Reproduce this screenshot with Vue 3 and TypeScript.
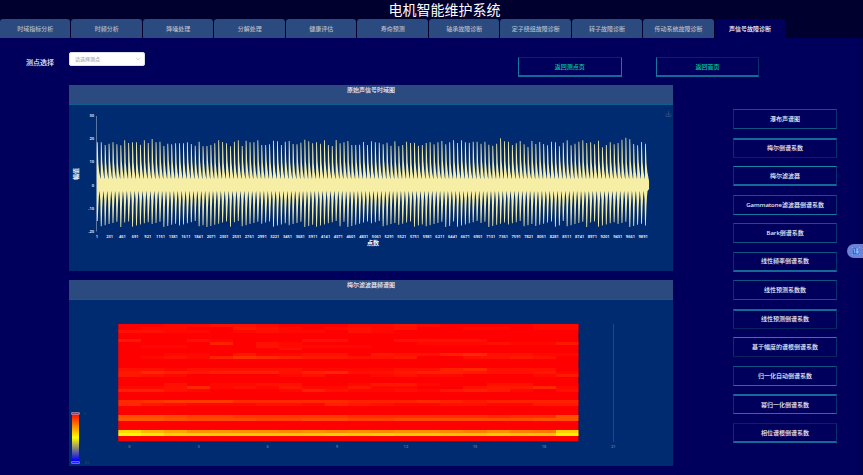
<script setup lang="ts">
import { ref } from 'vue'

interface SideItem {
  label: string
  top: string
  bottom: string
}

const tabs: string[] = [
  '时域指标分析', '时频分析', '降噪处理', '分解处理', '健康评估', '寿命预测',
  '轴承故障诊断', '定子绕组故障诊断', '转子故障诊断', '传动系统故障诊断', '声信号故障诊断',
]
const activeTab = ref(10)
const point = ref('')

const sideItems: SideItem[] = [
  { label: '瀑布声谱图', top: 'mid', bottom: 'mid' },
  { label: '梅尔倒谱系数', top: 'strong', bottom: 'dim' },
  { label: '梅尔滤波器', top: 'bright', bottom: 'strong' },
  { label: 'Gammatone滤波器倒谱系数', top: 'mid', bottom: 'bright' },
  { label: 'Bark倒谱系数', top: 'mid', bottom: 'mid' },
  { label: '线性频率倒谱系数', top: 'mid', bottom: 'strong' },
  { label: '线性预测系数数', top: 'mid', bottom: 'mid' },
  { label: '线性预测倒谱系数', top: 'strong', bottom: 'dim' },
  { label: '基于幅度的谱根倒谱系数', top: 'bright', bottom: 'dim' },
  { label: '归一化自动倒谱系数', top: 'mid', bottom: 'bright' },
  { label: '幂归一化倒谱系数', top: 'strong', bottom: 'bright' },
  { label: '相位谱根倒谱系数', top: 'dim', bottom: 'strong' },
]

// Waveform: height of each impulse above the zero line, in tenths of a chart unit
const peaks: number[] = [
  427, 427, 400, 413, 427, 407, 397, 447, 420, 427, 427, 403, 447, 420, 460, 427, 433, 390, 413, 407,
  417, 417, 417, 427, 410, 393, 433, 387, 390, 400, 417, 447, 430, 417, 387, 433, 447, 390, 443, 427, 427,
  447, 400, 400, 407, 443, 437, 400, 433, 440, 410, 407, 423, 453, 437, 417, 427, 413, 447, 400, 390,
  450, 417, 427, 440, 400, 400, 403, 430, 400, 437, 427, 423, 407, 423, 393, 437, 387, 400, 433, 420,
  423, 393, 400, 420, 427, 407, 427, 440, 407, 427, 447, 420,
  447, 427, 423, 433, 433, 413, 433, 403, 393, 413, 467, 437, 433, 400, 417, 440, 407, 380, 440, 410,
  430, 410, 397, 433, 427, 387, 423, 447, 397, 413, 433, 447, 420, 427, 407, 443, 377, 400, 427, 407,
  420, 453, 473, 457, 410, 397, 430, 413,
]
const zeroY = 80
const startX = 28
const step = 552 / peaks.length

function wavePath(): string {
  const up: string[] = []
  const down: string[] = []
  peaks.forEach((peak, i) => {
    const x = startX + i * step
    const h = peak / 10
    const d = 36 + ((i * 37 + (i % 7) * 11) % 17) * 0.38
    const n = (i * 13) % 5 * 0.5
    const add = (list: string[], dx: number, y: number) =>
      list.push(`${(x + dx).toFixed(2)} ${(zeroY + y).toFixed(2)}`)
    add(up, -0.2, -7)
    add(up, -0.1, -h)
    add(up, 0.7, -h)
    add(up, 1.3, -22 - n)
    add(up, 2.2, -13 - n)
    add(up, 3.0, -9)
    add(up, 3.5, -6)
    add(down, -1.3, 7)
    add(down, -0.6, 14 + n)
    add(down, -0.1, d)
    add(down, 0.7, d)
    add(down, 1.3, 21 + n)
    add(down, 1.9, 11 + n)
    add(down, 2.4, 6)
  })
  down.shift()
  down.shift()
  return `M${up.join('L')}L${startX + 552} 76V84L${down.reverse().join('L')}Z`
}
const wave = wavePath()

const yTicks = [30, 20, 10, 0, -10, -20].map((value) => ({ value, y: zeroY - value * 2.31 }))
const xTicks = Array.from({ length: 44 }, (_, i) => ({ value: 1 + i * 230, x: startX + i * 12.7 }))

// Heat map: one base-36 digit for each cell, eight steps of green per unit
const heat: Record<number, string> = {
  0: '00112210001121000011',
  1: '01100321012120011011',
  2: '22110121102100000000',
  5: '30021000220022220000',
  6: '00004021000001112113',
  7: '01100021111000000000',
  8: '00000002000000000000',
  10: '00110311220322452211',
  11: '01214654332230022320',
  15: '22122222111122452220',
  16: '35434442452234432231',
  17: '32100001200121100013',
  20: '00201122001331002200',
  21: '11251213113110023351',
  22: '44210001421121343102',
  26: '56777555554445434444',
  27: '53211122143211221133',
  31: 'aa98877777666666566a',
  32: 'bba999889988999999aa',
  36: 'rnlijiihihihiihgigfq',
  37: 'vtqqpppppqpqppoopoou',
}
const cells = Object.entries(heat).flatMap(([row, line]) =>
  [...line].map((c, col) => ({
    key: `${row}-${col}`,
    x: 49 + col * 23.03,
    y: 24 + Number(row) * 2.94,
    fill: `rgb(255, ${parseInt(c, 36) * 8}, 0)`,
  })),
)
const heatTicks = [0, 3, 6, 9, 12, 15, 18, 21].map((value) => ({ value, x: 60.5 + value * 23.03 }))
</script>

<template>
  <div class="page">
    <header class="top">
      <h1>电机智能维护系统</h1>
      <nav class="tabs">
        <button
          v-for="(tab, i) in tabs"
          :key="tab"
          type="button"
          class="tab"
          :class="{ active: i === activeTab }"
          @click="activeTab = i"
        >{{ tab }}</button>
      </nav>
    </header>

    <main>
      <div class="toolbar">
        <label for="point">测点选择</label>
        <div class="select">
          <select id="point" v-model="point">
            <option value="">请选择测点</option>
          </select>
          <svg viewBox="0 0 6 4" aria-hidden="true"><path d="M1 .8 3 3 5 .8" /></svg>
        </div>
        <div class="back">
          <button type="button" class="outline t-dim b-strong l-bright r-bright">返回测点页</button>
          <button type="button" class="outline t-dim b-strong l-bright">返回首页</button>
        </div>
      </div>

      <div class="content">
        <div class="charts">
          <section class="panel">
            <h2>原始声信号时域图</h2>
            <svg class="chart" viewBox="0 0 604 166" role="img" aria-label="原始声信号时域图">
              <path class="axis" d="M27.5 11V126.5" />
              <text v-for="t in yTicks" :key="t.value" class="tick end" x="25" :y="t.y + 1.5">{{ t.value }}</text>
              <path class="wave" :d="wave" />
              <text v-for="t in xTicks" :key="t.value" class="tick" :x="t.x" y="132.5">{{ t.value }}</text>
              <text class="name" x="304" y="139.5">点数</text>
              <text class="name" transform="translate(9 69) rotate(-90)">幅值</text>
              <path class="download" d="M599.5 6v4M597.6 8.3l1.9 2 1.9-2M597 9.5v2h5v-2" />
            </svg>
          </section>

          <section class="panel">
            <h2>梅尔滤波器频谱图</h2>
            <svg class="chart" viewBox="0 0 604 166" role="img" aria-label="梅尔滤波器频谱图">
              <defs>
                <linearGradient id="scale" x1="0" y1="0" x2="0" y2="1">
                  <stop offset="0" stop-color="#f00" />
                  <stop offset=".5" stop-color="#ff0" />
                  <stop offset=".97" stop-color="#00f" />
                </linearGradient>
              </defs>
              <rect x="49" y="24" width="460.6" height="117.6" fill="#f00" />
              <g shape-rendering="crispEdges">
                <rect v-for="c in cells" :key="c.key" :x="c.x" :y="c.y" width="23.03" height="2.94" :fill="c.fill" />
              </g>
              <rect class="edge" x="49" y="23.5" width="460.6" height="118" />
              <path class="split" d="M544.5 24V142" />
              <text v-for="t in heatTicks" :key="t.value" class="tick faint" :x="t.x" y="147.5">{{ t.value }}</text>
              <rect x="3" y="113" width="7" height="49" fill="url(#scale)" />
              <rect class="handle" x="2.5" y="112.5" width="8" height="2" rx=".5" fill="#f22" />
              <rect class="handle" x="2.5" y="161.5" width="8" height="2" rx=".5" fill="#22f" />
              <text class="tick dark" x="14.5" y="114.5">0</text>
              <text class="tick dark" x="14.5" y="163.5">-80</text>
            </svg>
          </section>
        </div>

        <aside class="side">
          <button
            v-for="item in sideItems"
            :key="item.label"
            type="button"
            class="outline"
            :class="[`t-${item.top}`, `b-${item.bottom}`]"
          >{{ item.label }}</button>
        </aside>
      </div>
    </main>

    <button type="button" class="float" aria-label="翻译">
      <svg viewBox="0 0 8 8" aria-hidden="true">
        <rect width="8" height="8" rx="1.5" fill="#2563dc" />
        <path d="M1.4 2h1v3.6l.9-.6M3.8 1.8h2.8L4 3.7M4.3 2.2l2.4 1.6M3.8 4.6h3M3.6 5.7h3.3M5.3 3.7v3.3" />
      </svg>
    </button>
  </div>
</template>

<style>
body {
  margin: 0;
  background: #00005c;
}
</style>

<style scoped>
.page {
  position: relative;
  min-height: 100vh;
  background: #00005c;
  color: #f0f1f8;
  font-family: "Noto Sans", "Noto Sans CJK SC", sans-serif;
  font-size: 6px;
  font-weight: 500;
  line-height: 10px;
  overflow: hidden;
}

button,
select {
  font: inherit;
  color: inherit;
  padding: 0;
  margin: 0;
}

button {
  cursor: pointer;
}

.top {
  background: #00002e;
}

h1 {
  margin: 0;
  padding-left: 3%;
  font-size: 14px;
  line-height: 19px;
  font-weight: 400;
  color: #fff;
  text-align: center;
}

.tabs {
  display: grid;
  grid-template-columns: repeat(11, minmax(0, 1fr));
  gap: 1px;
  padding-right: 9%;
}

.tab {
  height: 19px;
  border: 0;
  border-radius: 3px 3px 0 0;
  background: #2b4a80;
  color: #b9bcc4;
  white-space: nowrap;
}

.tab.active {
  background: #00005c;
  color: #fff;
}

main {
  box-shadow: inset -3px 0 #000052;
}

.toolbar {
  display: grid;
  grid-template-columns: 8% 8.75% 1fr 28% 12%;
  align-items: start;
  padding: 14px 0 8px;
}

.toolbar label {
  padding: 6px 15px 0 0;
  font-size: 7px;
  text-align: right;
}

.select {
  position: relative;
}

.select select {
  display: block;
  width: 100%;
  height: 14px;
  padding: 0 5px;
  appearance: none;
  border: 1px solid #dcdfe6;
  border-radius: 2px;
  background: #fff;
  color: #a8acb6;
  font-size: 5px;
}

.select svg {
  position: absolute;
  top: 5px;
  right: 4px;
  width: 6px;
  height: 4px;
  fill: none;
  stroke: #b4b8c0;
  stroke-width: .6;
  pointer-events: none;
}

.back {
  grid-column: 4;
  display: flex;
  justify-content: space-between;
  padding-top: 5px;
  color: #00d49a;
}

.back .outline {
  width: 43%;
}

.outline {
  height: 20px;
  border: 1px solid #08306c;
  background: transparent;
  white-space: nowrap;
}

.t-dim { border-top-color: #062462; }
.t-mid { border-top-color: #0d5482; }
.t-bright { border-top-color: #1787a8; }
.t-strong { border-top: 2px solid #126a96; }
.b-dim { border-bottom-color: #062462; }
.b-mid { border-bottom-color: #0d5482; }
.b-bright { border-bottom-color: #1478a0; }
.b-strong { border-bottom: 2px solid #126a96; }
.l-bright { border-left-color: #1478a0; }
.r-bright { border-right-color: #1478a0; }

.content {
  display: grid;
  grid-template-columns: 604fr 60fr 104fr;
  padding: 0 3% 9px 8%;
}

.charts {
  display: grid;
  gap: 9px;
}

.panel {
  background: #002b70;
}

h2 {
  margin: 0;
  height: 19px;
  border-bottom: 1px solid #0d5f90;
  background: #2b4a80;
  font-size: 6px;
  line-height: 10px;
  font-weight: 500;
  text-align: center;
}

.chart {
  display: block;
  width: 100%;
}

.tick {
  font-size: 4px;
  font-weight: 600;
  fill: #f2f4fa;
  text-anchor: middle;
}

.tick.end { text-anchor: end; }
.tick.faint { fill: #66758f; }
.tick.dark { fill: #2c3b55; text-anchor: start; }

.name {
  font-size: 6px;
  font-weight: 600;
  fill: #f4f6fa;
  text-anchor: middle;
}

.axis { stroke: #5a78a6; }
.wave { fill: #f6eea4; }
.split { stroke: #24478a; }

.edge {
  fill: none;
  stroke: #3a1a44;
  stroke-opacity: .6;
}

.handle {
  stroke: #a8a4d0;
  stroke-width: .6;
}

.download {
  fill: none;
  stroke: #35567f;
  stroke-width: .7;
}

.side {
  grid-column: 3;
  display: flex;
  flex-direction: column;
  justify-content: space-between;
  padding: 24px 0 23px;
}

.float {
  position: absolute;
  top: 244px;
  right: 0;
  display: flex;
  align-items: center;
  width: 16px;
  height: 14px;
  padding-left: 5px;
  border: 0;
  border-radius: 7px 0 0 7px;
  background: #6f82d2;
}

.float svg {
  width: 8px;
  height: 8px;
  flex: none;
  fill: none;
  stroke: #c8d8ff;
  stroke-width: .6;
}
</style>
